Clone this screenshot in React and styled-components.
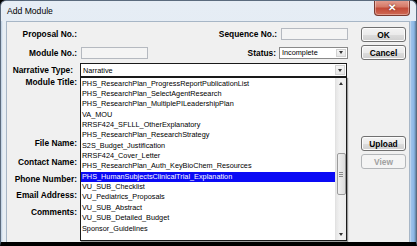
import React from "react";
import styled, { createGlobalStyle } from "styled-components";

const Global = createGlobalStyle`
  html, body { margin: 0; padding: 0; background: #000; }
  body { width: 417px; height: 246px; overflow: hidden; font-family: "Liberation Sans", Arial, sans-serif; }
  * { box-sizing: border-box; }
`;

const Window = styled.div`
  width: 417px;
  height: 246px;
  display: flex;
  flex-direction: column;
  border: 1px solid #5b6b7e;
  border-bottom: 4px solid #000;
  border-radius: 6px 6px 0 0;
  background: linear-gradient(180deg, #e6edf5 0%, #dde6ef 100%);
  overflow: hidden;
`;

const TitleBar = styled.div`
  height: 20px;
  flex: none;
  display: flex;
  align-items: flex-start;
  padding-left: 6px;
`;

const Title = styled.div`
  font-size: 8.6px;
  line-height: 20px;
  color: #000;
  flex: 1;
`;

const CloseButton = styled.div`
  width: 36px;
  height: 16px;
  margin-right: 6px;
  margin-top: -1px;
  border: 1px solid #7a3a30;
  border-top: none;
  border-radius: 0 0 4px 4px;
  background: linear-gradient(180deg, #e6a194 0%, #d57a68 45%, #c24a38 55%, #cf6a55 100%);
  box-shadow: inset 0 0 0 1px rgba(255, 255, 255, 0.35);
  display: flex;
  align-items: center;
  justify-content: center;
  color: #fff;
  font-size: 10px;
  font-weight: bold;
  text-shadow: 0 0 2px #5a1a10;
`;

const Body = styled.div`
  flex: 1;
  display: flex;
`;

const LeftFrame = styled.div`
  width: 5px;
  background: linear-gradient(90deg, #b9cde2 0px, #e9eff5 2px, #e6edf4 100%);
`;

const RightFrame = styled.div`
  width: 6px;
  background: linear-gradient(90deg, #d7e5f4 0px, #9fc3ea 1px, #8cb7e6 4px, #5f7f9f 100%);
`;

const Client = styled.div`
  flex: 1;
  display: flex;
  background: #f0f0f0;
  border: 1px solid #a7b6c6;
  border-bottom: none;
`;

const FormArea = styled.div`
  width: 341px;
  position: relative;
  display: flex;
  flex-direction: column;
`;

const Row = styled.div`
  display: flex;
  align-items: center;
  height: ${(p) => p.$h}px;
  margin-top: ${(p) => p.$mt}px;
`;

const Label = styled.div`
  width: ${(p) => (p.$w ? `${p.$w}px` : "auto")};
  padding-right: ${(p) => p.$pr || 0}px;
  text-align: right;
  font-size: 8.4px;
  font-weight: bold;
  color: #000;
  white-space: nowrap;
  flex: none;
  line-height: 10px;
`;

const Spacer = styled.div`
  flex: 1;
`;

const TextBox = styled.div`
  width: ${(p) => p.$w}px;
  height: 12px;
  margin-left: ${(p) => p.$ml}px;
  border: 1px solid #b5b9c0;
  background: #f4f4f4;
  flex: none;
`;

const Select = styled.div`
  width: ${(p) => p.$w}px;
  height: ${(p) => p.$h}px;
  margin-left: ${(p) => p.$ml}px;
  border: 1px solid ${(p) => (p.$focus ? "#1a1a1a" : "#8a8a8a")};
  background: #fff;
  display: flex;
  align-items: center;
  flex: none;
  font-size: 7.3px;
  color: #000;
  padding-left: 2px;
`;

const SelectText = styled.span`
  flex: 1;
  white-space: nowrap;
`;

const ArrowBox = styled.div`
  width: 10px;
  height: calc(100% - 2px);
  margin-right: 1px;
  background: linear-gradient(180deg, #f6f6f6, #e6e6e6);
  border: 1px solid #d2d2d2;
  display: flex;
  align-items: center;
  justify-content: center;
`;

const Tri = styled.div`
  width: 0;
  height: 0;
  border-left: 2.5px solid transparent;
  border-right: 2.5px solid transparent;
  ${(p) => (p.$up ? "border-bottom: 3px solid #333;" : "border-top: 3px solid #333;")}
`;

const LabelColumn = styled.div`
  display: flex;
  flex-direction: column;
`;

const FieldLabel = styled(Label)`
  width: 70px;
  margin-top: ${(p) => p.$mt}px;
`;

const DropList = styled.div`
  position: absolute;
  left: 73px;
  top: 55px;
  width: 267px;
  height: 164px;
  border: 1px solid #1a1a1a;
  background: #fff;
  display: flex;
  box-shadow: 1px 1px 1px rgba(0, 0, 0, 0.35);
`;

const Items = styled.div`
  flex: 1;
  padding-top: 0.5px;
`;

const Item = styled.div`
  height: 10.36px;
  line-height: 10.36px;
  font-size: 7.3px;
  padding-left: 1px;
  white-space: nowrap;
  overflow: hidden;
  color: ${(p) => (p.$sel ? "#fff" : "#000")};
  background: ${(p) => (p.$sel ? "#0a0af5" : "transparent")};
`;

const Scrollbar = styled.div`
  width: 11px;
  display: flex;
  flex-direction: column;
  align-items: center;
  background: linear-gradient(90deg, #e6e6e6, #f2f2f2 40%, #ececec);
  border-left: 1px solid #e2e2e2;
`;

const ScrollArrow = styled.div`
  height: 11px;
  width: 100%;
  display: flex;
  align-items: center;
  justify-content: center;
`;

const Thumb = styled.div`
  width: 9px;
  height: 42px;
  margin-top: ${(p) => p.$mt}px;
  border: 1px solid #9c9c9c;
  border-radius: 2px;
  background: linear-gradient(90deg, #f1f1f1, #dcdcdc);
  display: flex;
  flex-direction: column;
  align-items: center;
  justify-content: center;
  gap: 1px;
`;

const Grip = styled.div`
  width: 4px;
  height: 1px;
  background: #8a8a8a;
`;

const ButtonCol = styled.div`
  margin-left: 13px;
  width: 45px;
  display: flex;
  flex-direction: column;
  padding-top: 5px;
`;

const Button = styled.div`
  height: 15px;
  margin-top: ${(p) => p.$mt || 0}px;
  border: 1px solid ${(p) => (p.$disabled ? "#b3b6b9" : "#707070")};
  border-radius: 3px;
  background: ${(p) =>
    p.$disabled
      ? "#f4f4f4"
      : "linear-gradient(180deg, #f3f3f3 0%, #ebebeb 50%, #dddddd 51%, #cfcfcf 100%)"};
  box-shadow: inset 0 0 0 1px ${(p) => (p.$disabled ? "#f4f4f4" : "#fcfcfc")};
  display: flex;
  align-items: center;
  justify-content: center;
  font-size: 8.4px;
  font-weight: bold;
  color: ${(p) => (p.$disabled ? "#a0a0a0" : "#000")};
`;

const items = [
  "PHS_ResearchPlan_ProgressReportPublicationList",
  "PHS_ResearchPlan_SelectAgentResearch",
  "PHS_ResearchPlan_MultiplePILeadershipPlan",
  "VA_MOU",
  "RRSF424_SFLLL_OtherExplanatory",
  "PHS_ResearchPlan_ResearchStrategy",
  "S2S_Budget_Justification",
  "RRSF424_Cover_Letter",
  "PHS_ResearchPlan_Auth_KeyBioChem_Resources",
  "PHS_HumanSubjectsClinicalTrial_Explanation",
  "VU_SUB_Checklist",
  "VU_Pediatrics_Proposals",
  "VU_SUB_Abstract",
  "VU_SUB_Detailed_Budget",
  "Sponsor_Guidelines",
];

export default function App() {
  return (
    <>
      <Global />
      <Window>
        <TitleBar>
          <Title>Add Module</Title>
          <CloseButton>✕</CloseButton>
        </TitleBar>
        <Body>
          <LeftFrame />
          <Client>
            <FormArea>
              <Row $h={12} $mt={6}>
                <Label $w={70}>Proposal No.:</Label>
                <Spacer />
                <Label>Sequence No.:</Label>
                <TextBox $w={67} $ml={4} />
              </Row>
              <Row $h={13} $mt={6}>
                <Label $w={70}>Module No.:</Label>
                <TextBox $w={67} $ml={4} />
                <Spacer />
                <Label>Status:</Label>
                <Select $w={69} $h={12} $ml={3}>
                  <SelectText>Incomplete</SelectText>
                  <ArrowBox>
                    <Tri />
                  </ArrowBox>
                </Select>
              </Row>
              <Row $h={14} $mt={4}>
                <Label $w={70} $pr={4}>Narrative Type:</Label>
                <Select $w={267} $h={14} $ml={3} $focus>
                  <SelectText>Narrative</SelectText>
                  <ArrowBox>
                    <Tri />
                  </ArrowBox>
                </Select>
              </Row>
              <LabelColumn>
                <FieldLabel $mt={0}>Module Title:</FieldLabel>
                <FieldLabel $mt={51}>File Name:</FieldLabel>
                <FieldLabel $mt={9}>Contact Name:</FieldLabel>
                <FieldLabel $mt={7}>Phone Number:</FieldLabel>
                <FieldLabel $mt={6}>Email Address:</FieldLabel>
                <FieldLabel $mt={7}>Comments:</FieldLabel>
              </LabelColumn>
              <DropList>
                <Items>
                  {items.map((t, i) => (
                    <Item key={t} $sel={i === 9}>
                      {t}
                    </Item>
                  ))}
                </Items>
                <Scrollbar>
                  <ScrollArrow>
                    <Tri $up />
                  </ScrollArrow>
                  <Thumb $mt={64}>
                    <Grip />
                    <Grip />
                    <Grip />
                  </Thumb>
                  <Spacer />
                  <ScrollArrow>
                    <Tri />
                  </ScrollArrow>
                </Scrollbar>
              </DropList>
            </FormArea>
            <ButtonCol>
              <Button>OK</Button>
              <Button $mt={3}>Cancel</Button>
              <Button $mt={76}>Upload</Button>
              <Button $mt={3} $disabled>
                View
              </Button>
            </ButtonCol>
          </Client>
          <RightFrame />
        </Body>
      </Window>
    </>
  );
}
